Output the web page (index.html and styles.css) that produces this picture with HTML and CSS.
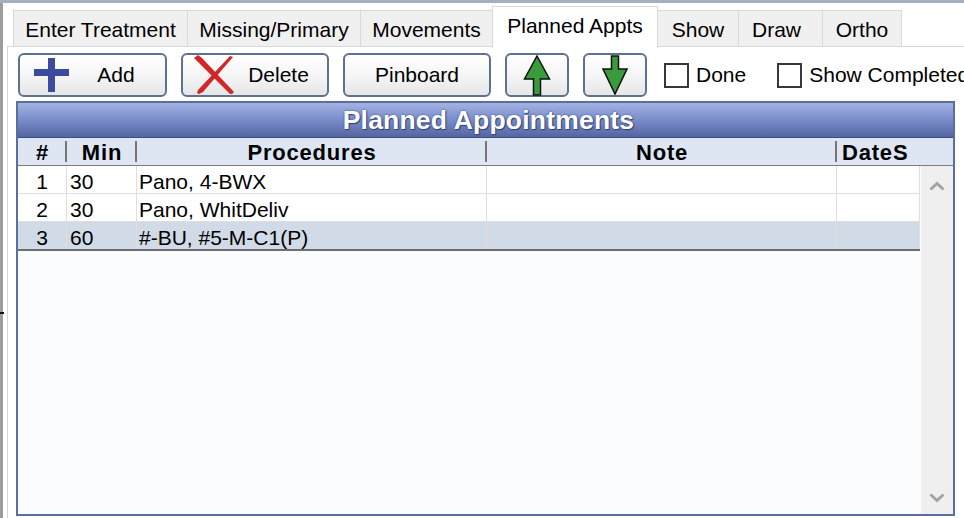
FILE: index.html
```html
<!DOCTYPE html>
<html>
<head>
<meta charset="utf-8">
<title>Planned Appointments</title>
<link rel="stylesheet" href="styles.css">
</head>
<body>
<div class="window">
  <div class="topbar"></div>
  <div class="main">
    <div class="leftbar"><span class="tick"></span></div>
    <div class="tabctl">
      <div class="tabs">
        <div class="tab">Enter Treatment</div>
        <div class="tab">Missing/Primary</div>
        <div class="tab">Movements</div>
        <div class="tab sel">Planned Appts</div>
        <div class="tab">Show</div>
        <div class="tab">Draw</div>
        <div class="tab">Ortho</div>
      </div>
      <div class="page">
        <div class="toolbar">
          <button class="btn wide">
            <span class="ico"><svg width="35" height="34" viewBox="0 0 35 34"><rect x="14" y="0" width="7" height="34" fill="#3d4b9f"/><rect x="0" y="11" width="35" height="7" fill="#3d4b9f"/></svg></span>
            <span class="lbl">Add</span>
          </button>
          <button class="btn wide">
            <span class="ico"><svg width="42" height="40" viewBox="0 0 42 40"><path d="M1 3 L5 0 L9 3 L41 37 L39 39 L37 39 Z" fill="#d42626"/><path d="M37 1 L40 2 L10 37 L6 39 L4 38 L5 35 Z" fill="#d42626"/></svg></span>
            <span class="lbl">Delete</span>
          </button>
          <button class="btn wide"><span class="lbl">Pinboard</span></button>
          <button class="btn narrow"><svg width="28" height="41" viewBox="0 0 28 41"><path d="M14 1 L26.5 24 L17.5 24 L17.5 40 L10.5 40 L10.5 24 L1.5 24 Z" fill="#3a9b3a" stroke="#111" stroke-width="1.5"/></svg></button>
          <button class="btn narrow"><svg width="26" height="40" viewBox="0 0 26 40"><path d="M9.5 1 L16.5 1 L16.5 14 L25 14 L13 39 L1 14 L9.5 14 Z" fill="#3a9b3a" stroke="#111" stroke-width="1.5"/></svg></button>
          <label class="chk first"><span class="box"></span>Done</label>
          <label class="chk second"><span class="box"></span>Show Completed</label>
        </div>
        <div class="grid">
          <div class="gtitle">Planned Appointments</div>
          <div class="ghead">
            <div class="c c-num sep">#</div>
            <div class="c c-min sep">Min</div>
            <div class="c c-proc sep">Procedures</div>
            <div class="c c-note sep">Note</div>
            <div class="c c-date left">DateS</div>
          </div>
          <div class="gbody">
            <div class="rows">
              <div class="row">
                <div class="c c-num">1</div>
                <div class="c c-min left">30</div>
                <div class="c c-proc left">Pano, 4-BWX</div>
                <div class="c c-note"></div>
                <div class="c c-date"></div>
              </div>
              <div class="row">
                <div class="c c-num">2</div>
                <div class="c c-min left">30</div>
                <div class="c c-proc left">Pano, WhitDeliv</div>
                <div class="c c-note"></div>
                <div class="c c-date"></div>
              </div>
              <div class="row sel last">
                <div class="c c-num">3</div>
                <div class="c c-min left">60</div>
                <div class="c c-proc left">#-BU, #5-M-C1(P)</div>
                <div class="c c-note"></div>
                <div class="c c-date"></div>
              </div>
            </div>
            <div class="vscroll">
              <svg width="16" height="10" viewBox="0 0 16 10"><path d="M1.5 8.5 L8 2.5 L14.5 8.5" fill="none" stroke="#a3a3a3" stroke-width="3"/></svg>
              <svg width="16" height="10" viewBox="0 0 16 10"><path d="M1.5 1.5 L8 7.5 L14.5 1.5" fill="none" stroke="#a3a3a3" stroke-width="3"/></svg>
            </div>
          </div>
        </div>
      </div>
    </div>
  </div>
</div>
</body>
</html>
```

FILE: styles.css
```css
* { box-sizing: border-box; }
html, body { margin: 0; padding: 0; background: #fff; }
body {
  width: 964px; height: 518px; overflow: hidden;
  font-family: "Liberation Sans", Arial, sans-serif;
  font-size: 21px; color: #000;
}
.window { display: flex; flex-direction: column; height: 518px; }
.topbar { height: 3px; background: #a6aebf; flex: none; }
.main { flex: 1; display: flex; min-height: 0; }
.leftbar { width: 3px; background: #9d9d9d; flex: none; }
.tick { display: block; width: 4px; height: 2px; background: #111; margin-top: 309px; }

.tabctl { flex: 1; display: flex; flex-direction: column; margin-left: 4px; min-width: 0; }
.tabs { display: flex; align-items: flex-end; height: 43px; padding-left: 6px; flex: none; }
.tab {
  height: 36px; flex: none;
  background: #f0f0f0;
  border-top: 1px solid #d9d9d9; border-left: 1px solid #d9d9d9;
  text-align: center; padding-top: 7px; white-space: nowrap;
}
.tab:nth-child(1) { width: 174px; }
.tab:nth-child(2) { width: 173px; }
.tab:nth-child(3) { width: 132px; }
.tab:nth-child(4) { width: 166px; }
.tab:nth-child(5) { width: 80px; }
.tab:nth-child(6) { width: 84px; padding-right: 8px; }
.tab:nth-child(7) { width: 80px; border-right: 1px solid #d9d9d9; }
.tab.sel {
  height: 42px; margin-bottom: -2px;
  background: #fff; border-right: 1px solid #d9d9d9;
  position: relative; z-index: 1;
}
.tab.sel + .tab { border-left: none; }

.page {
  flex: 1; background: #fff;
  border-top: 1px solid #d9d9d9; border-left: 1px solid #d4d4d4;
  padding: 6px 9px 2px 8px;
  display: flex; flex-direction: column; min-height: 0;
}
.toolbar { height: 44px; flex: none; display: flex; align-items: center; gap: 14px; margin-left: 2px; }
.btn {
  height: 44px; flex: none;
  border: 2px solid #5c7290; border-radius: 6px;
  background: linear-gradient(#ffffff, #f4f4f4 55%, #e6e6e6);
  font: inherit; color: #000;
  display: flex; align-items: center; padding: 0;
}
.btn.wide { width: 148px; }
.btn.wide:first-child { width: 149px; }
.btn.narrow { width: 64px; justify-content: center; }
.ico { width: 44px; margin-left: 9px; display: flex; justify-content: center; align-items: center; flex: none; }
.ico svg, .btn svg { display: block; }
.lbl { flex: 1; text-align: center; padding-right: 6px; }
.btn.wide .lbl:only-child { padding-right: 0; }

.chk { display: flex; align-items: center; gap: 7px; white-space: nowrap; }
.chk.first { margin-left: 3px; }
.chk.second { margin-left: 17px; }
.box { width: 25px; height: 25px; border: 2px solid #383838; background: #fff; display: block; }

.grid {
  margin-top: 4px; height: 415px; flex: none;
  border: 2px solid #5b6f9f;
  display: flex; flex-direction: column;
  background: #fbfcfe;
}
.gtitle {
  height: 35px; flex: none;
  border-bottom: 1px solid #3c4d85;
  background: linear-gradient(#a4b2e3 0%, #8194d0 40%, #6a7dba 70%, #53669f 100%);
  color: #fff; font-weight: bold; font-size: 26.5px; letter-spacing: 0.2px;
  text-align: center; line-height: 31px; padding-top: 2px; padding-left: 6px;
  text-shadow: 0 0 2px #34457a, 1px 1px 1px #2f3f72;
}
.ghead {
  height: 28px; flex: none; display: flex;
  background: #dde6f2; border-bottom: 1px solid #7c7c7c;
  font-weight: bold; font-size: 22px; letter-spacing: 0.8px;
}
.ghead .c { line-height: 25px; padding-top: 2px; height: 27px; }
.sep { background: linear-gradient(#767676, #767676) right center / 2px 21px no-repeat; }

.c { flex: none; white-space: nowrap; overflow: hidden; text-align: center; }
.c.left { text-align: left; }
.c-num { width: 49px; }
.c-min { width: 70px; }
.c-proc { width: 350px; }
.c-note { width: 350px; }
.c-date { width: 83px; }
.ghead .c-date { padding-left: 5px; }

.gbody { flex: 1; display: flex; min-height: 0; }
.rows { width: 902px; flex: none; }
.row { display: flex; height: 28px; background: #fff; border-bottom: 1px solid #dedede; }
.row.sel { background: #d0dbe7; }
.row.last { height: 29px; border-bottom: 2px solid #6e6e6e; }
.row .c { border-right: 1px solid #dedede; line-height: 23px; padding-top: 4px; height: 27px; }
.row .c.left { padding-left: 2px; }
.row .c-min.left { padding-left: 3px; }

.vscroll {
  flex: 1; margin-left: 1px; background: #efefef;
  display: flex; flex-direction: column; justify-content: space-between; align-items: center;
  padding: 15px 0 11px;
}
.vscroll svg { display: block; }
```
